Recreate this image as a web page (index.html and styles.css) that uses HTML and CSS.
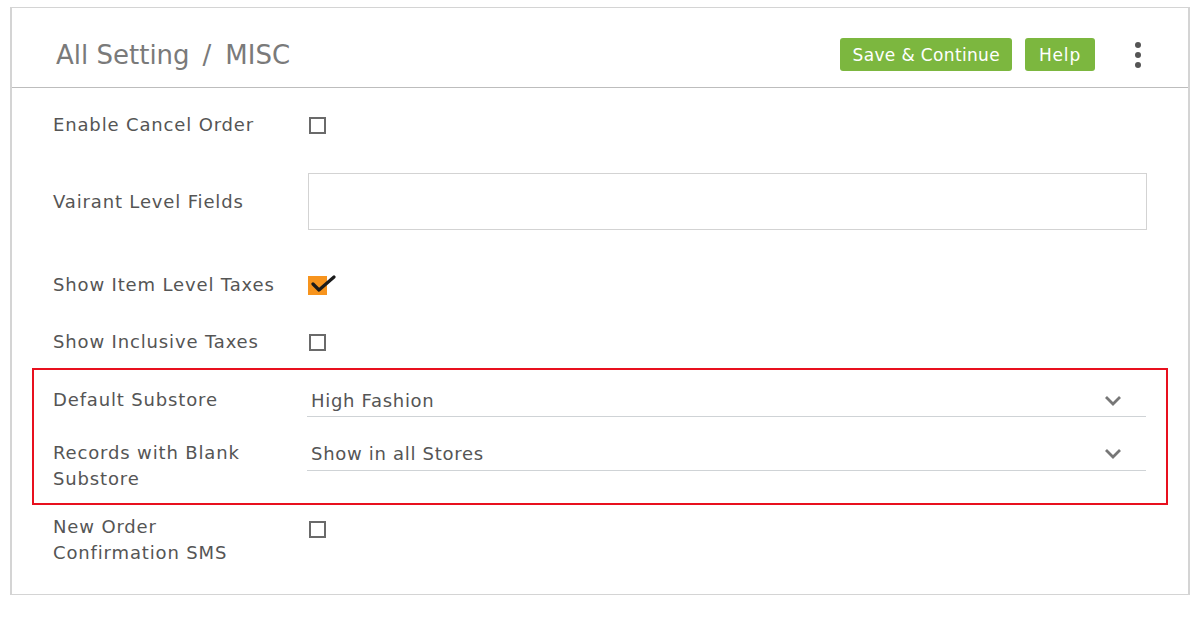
FILE: index.html
```html
<!DOCTYPE html>
<html lang="en">
<head>
  <meta charset="UTF-8">
  <title>All Setting / MISC</title>
  <meta name="viewport" content="width=device-width, initial-scale=1.0">
  <link rel="stylesheet" href="styles.css">
</head>
<body>
  <div class="settings-card">
    <div class="card-header">
      <h1 class="crumbs"><span>All Setting</span><span class="sep">/</span><span>MISC</span></h1>
      <div class="actions">
        <button class="btn" type="button">Save &amp; Continue</button>
        <button class="btn btn-help" type="button">Help</button>
        <span class="kebab"><i></i><i></i><i></i></span>
      </div>
    </div>

    <form class="settings-form" autocomplete="off">
      <div class="row row-cancel">
        <label class="field-label" for="cancelOrder">Enable Cancel Order</label>
        <span class="check" id="cancelOrder"></span>
      </div>

      <div class="row row-variant">
        <label class="field-label" for="variantFields">Vairant Level Fields</label>
        <div class="textbox" id="variantFields"></div>
      </div>

      <div class="row row-taxes">
        <label class="field-label">Show Item Level Taxes</label>
        <span class="check checked">
          <svg viewBox="0 0 28 20" width="28" height="20"><path d="M4 9 L10 15 L25 2" fill="none" stroke="#1b1b1b" stroke-width="3.2" stroke-linecap="round" stroke-linejoin="round"/></svg>
        </span>
      </div>

      <div class="row row-inclusive">
        <label class="field-label">Show Inclusive Taxes</label>
        <span class="check"></span>
      </div>

      <!-- substore block, outlined in red -->
      <div class="highlight">
        <div class="row row-substore">
          <label class="field-label">Default Substore</label>
          <div class="select">
            <span>High Fashion</span>
            <svg viewBox="0 0 18 11" width="18" height="11"><path d="M2 2 L9 9 L16 2" fill="none" stroke="#777" stroke-width="2.8"/></svg>
          </div>
        </div>
        <div class="row row-blank">
          <label class="field-label">Records with Blank Substore</label>
          <div class="select">
            <span>Show in all Stores</span>
            <svg viewBox="0 0 18 11" width="18" height="11"><path d="M2 2 L9 9 L16 2" fill="none" stroke="#777" stroke-width="2.8"/></svg>
          </div>
        </div>
      </div>

      <div class="row row-sms">
        <label class="field-label">New Order Confirmation SMS</label>
        <span class="check"></span>
      </div>
    </form>
  </div>
</body>
</html>
```

FILE: styles.css
```css
body {
  margin: 0;
  font-family: 'DejaVu Sans', 'Noto Sans', sans-serif;
  background: #fff;
  color: #5b5b5b;
}
.settings-card {
  margin: 7px 10px 0 10px;
  border: 1px solid #cfcfcf;
  border-left-width: 2px;
  border-right-width: 2px;
  border-color: #d4d4d4;
  box-sizing: border-box;
  width: 1180px;
}
.card-header {
  height: 80px;
  border-bottom: 1px solid #bdbdbd;
  display: flex;
  align-items: center;
  justify-content: space-between;
  padding: 14px 0 0 44px;
  box-sizing: border-box;
}
.crumbs {
  margin: 0;
  font-size: 26px;
  font-weight: normal;
  color: #7a7a7a;
  display: flex;
  align-items: center;
}
.crumbs .sep {
  margin: 0 14px 0 13px;
}
.actions {
  display: flex;
  align-items: center;
  gap: 13px;
}
.btn {
  background: #7cb73f;
  color: #fff;
  border: none;
  border-radius: 3px;
  height: 33px;
  padding: 0 12px 0 13px;
  font-family: inherit;
  font-size: 17px;
  letter-spacing: 0.35px;
  cursor: pointer;
}
.btn-help {
  padding: 0 14px 0 14px;
  letter-spacing: 0.8px;
}
.kebab {
  display: flex;
  flex-direction: column;
  gap: 4px;
  width: 6px;
  margin: 0 47px 0 27px;
}
.kebab i {
  display: block;
  width: 6px;
  height: 6px;
  border-radius: 50%;
  background: #555;
}
.settings-form {
  padding: 0 41px 28px 41px;
}
.row {
  display: flex;
  align-items: center;
}
.field-label {
  width: 230px;
  flex: none;
  margin-right: 25px;
  font-size: 18px;
  letter-spacing: 0.85px;
  line-height: 26px;
  color: #555;
}
.row-cancel { height: 74px; }
.row-variant { height: 80px; }
.row-taxes { height: 86px; }
.row-inclusive { height: 28px; margin-bottom: 12px; }
.check {
  width: 17px;
  height: 17px;
  border: 2px solid #6a6a6a;
  box-sizing: border-box;
  margin-left: 1px;
  position: relative;
}
.check.checked {
  width: 19px;
  height: 19px;
  border: none;
  margin-left: 0;
  background: #f7941d;
}
.check.checked svg {
  position: absolute;
  left: 1px;
  top: -1px;
}
.textbox {
  flex: 1;
  height: 57px;
  border: 1px solid #d3d3d3;
  box-sizing: border-box;
  margin-top: -1px;
}
.highlight {
  margin: 0 -21px;
  padding: 0 19px;
  border: 2px solid #e8101e;
}
.row-substore { height: 60px; }
.row-blank {
  align-items: flex-start;
  padding: 10px 0 11px 0;
}
.select {
  flex: 1;
  height: 32px;
  margin-left: -1px;
  margin-right: 1px;
  border-bottom: 1px solid #cfd3d6;
  display: flex;
  align-items: center;
  justify-content: space-between;
  padding: 0 24px 0 4px;
  box-sizing: border-box;
  font-size: 18px;
  letter-spacing: 0.7px;
  color: #555;
}
.row-substore .select { margin-top: 1px; }
.row-blank .select {
  margin-top: -3px;
  height: 34px;
  padding-bottom: 0;
}
.row-sms {
  align-items: flex-start;
  padding-top: 9px;
}
.row-sms .check { margin-top: 7px; }
```
